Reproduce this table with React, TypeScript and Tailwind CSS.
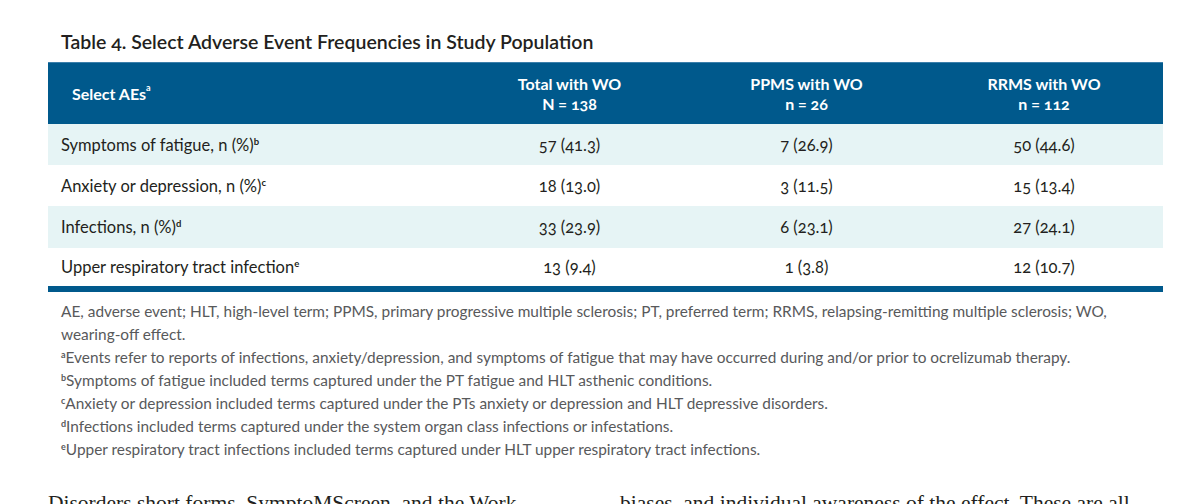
import React from "react";

const rows = [
  { label: "Symptoms of fatigue, n (%)", sup: "b", v: ["57 (41.3)", "7 (26.9)", "50 (44.6)"], shade: true, h: "h-[41px]" },
  { label: "Anxiety or depression, n (%)", sup: "c", v: ["18 (13.0)", "3 (11.5)", "15 (13.4)"], shade: false, h: "h-[41px]" },
  { label: "Infections, n (%)", sup: "d", v: ["33 (23.9)", "6 (23.1)", "27 (24.1)"], shade: true, h: "h-[42px]" },
  { label: "Upper respiratory tract infection", sup: "e", v: ["13 (9.4)", "1 (3.8)", "12 (10.7)"], shade: false, h: "h-[38px]" },
];

const notes: { sup?: string; text: string }[] = [
  { text: "AE, adverse event; HLT, high-level term; PPMS, primary progressive multiple sclerosis; PT, preferred term; RRMS, relapsing-remitting multiple sclerosis; WO," },
  { text: "wearing-off effect." },
  { sup: "a", text: "Events refer to reports of infections, anxiety/depression, and symptoms of fatigue that may have occurred during and/or prior to ocrelizumab therapy." },
  { sup: "b", text: "Symptoms of fatigue included terms captured under the PT fatigue and HLT asthenic conditions." },
  { sup: "c", text: "Anxiety or depression included terms captured under the PTs anxiety or depression and HLT depressive disorders." },
  { sup: "d", text: "Infections included terms captured under the system organ class infections or infestations." },
  { sup: "e", text: "Upper respiratory tract infections included terms captured under HLT upper respiratory tract infections." },
];

export default function App() {
  return (
    <div className="w-[1200px] h-[504px] overflow-hidden bg-white font-['Lato','Liberation_Sans',sans-serif] oldstyle-nums">
      <div className="pl-[61px] pt-[30px] h-[62px] text-[19.5px] leading-[24px] font-semibold text-[#231f20]">
        Table 4. Select Adverse Event Frequencies in Study Population
      </div>
      <div className="ml-[48px] w-[1115px]">
        <div className="grid grid-cols-[403px_237px_237px_238px] h-[62px] bg-[#00598c] border-t border-[#3b7fab] text-white font-bold text-[16px] leading-[20px]">
          <div className="flex items-center pl-[24px]">
            Select AEs<sup className="text-[9px] -top-[6px]">a</sup>
          </div>
          <div className="flex flex-col items-center justify-center">
            <span>Total with WO</span>
            <span>N = 138</span>
          </div>
          <div className="flex flex-col items-center justify-center">
            <span>PPMS with WO</span>
            <span>n = 26</span>
          </div>
          <div className="flex flex-col items-center justify-center">
            <span>RRMS with WO</span>
            <span>n = 112</span>
          </div>
        </div>
        {rows.map((r) => (
          <div
            key={r.label}
            className={`grid grid-cols-[403px_237px_237px_238px] ${r.h} items-center pt-[1px] text-[16.5px] text-[#231f20] ${r.shade ? "bg-[#e6f4f5]" : "bg-white"}`}
          >
            <div className="pl-[13px]">
              {r.label}
              <sup className="text-[9.5px] font-bold -top-[6px]">{r.sup}</sup>
            </div>
            {r.v.map((x, i) => (
              <div key={i} className="text-center">
                {x}
              </div>
            ))}
          </div>
        ))}
        <div className="h-[6px] bg-[#00598c]" />
      </div>
      <div className="pl-[61px] pt-[8px] text-[15.4px] leading-[23px] text-[#58595b]">
        {notes.map((n, i) => (
          <div key={i} className="whitespace-nowrap">
            {n.sup && <sup className="text-[9px] font-bold -top-[5px]">{n.sup}</sup>}
            {n.text}
          </div>
        ))}
      </div>
      <div className="mt-[28px] ml-[48px] w-[1115px] grid grid-cols-[572px_543px] font-['Liberation_Serif',serif] text-[21.5px] leading-[28px] text-[#231f20] whitespace-nowrap">
        <div>Disorders short forms, SymptoMScreen, and the Work</div>
        <div>biases, and individual awareness of the effect. These are all</div>
      </div>
    </div>
  );
}
